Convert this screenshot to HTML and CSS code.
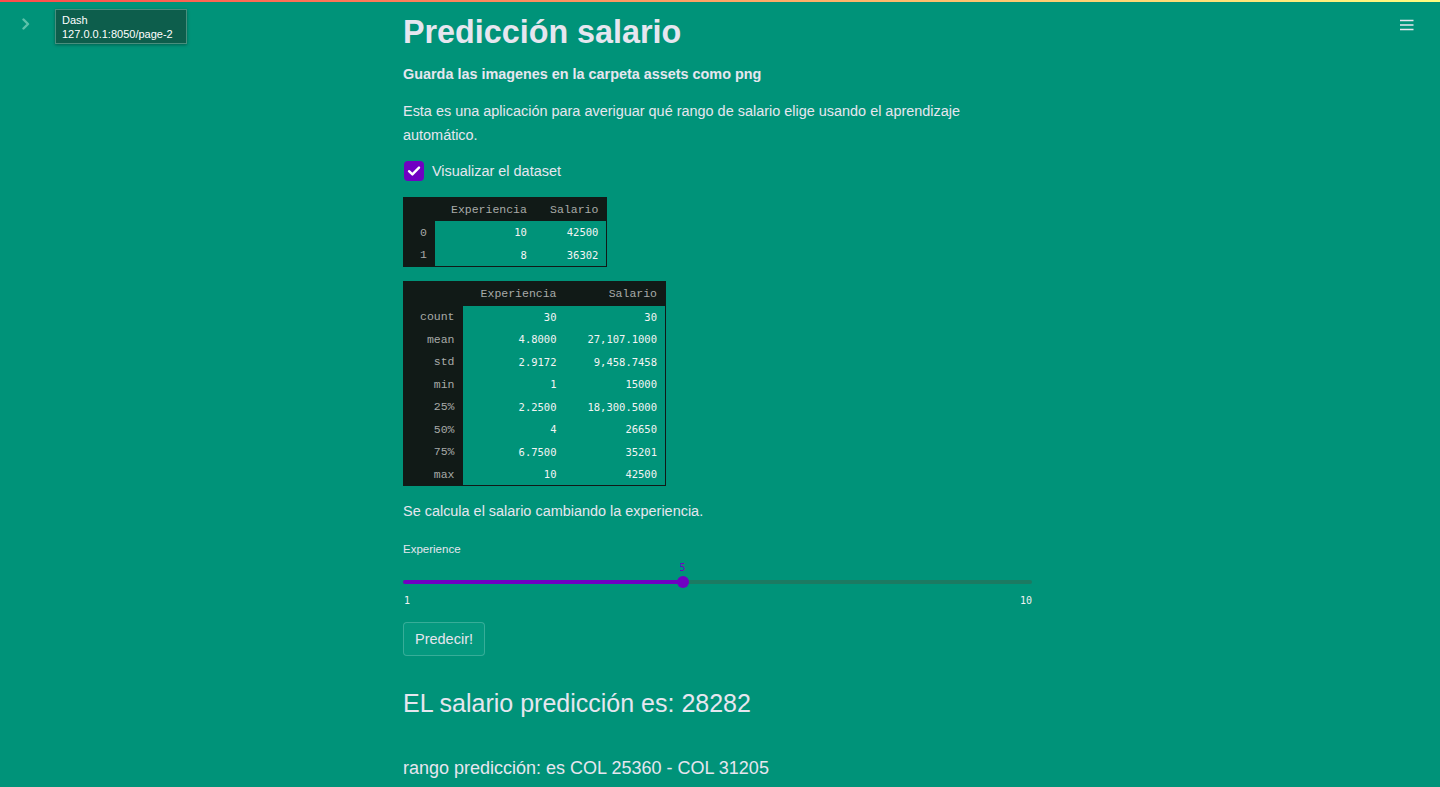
FILE: index.html
```html
<!DOCTYPE html>
<html lang="es">
<head>
<meta charset="utf-8">
<title>Predicción salario</title>
<link rel="stylesheet" href="styles.css">
</head>
<body>
<div class="decoration"></div>
<div class="app">
  <aside class="side">
    <button class="collapse" aria-label="Expand sidebar">
      <svg width="10" height="12" viewBox="0 0 10 12"><path d="M2.5 1.5 L7 6 L2.5 10.5" fill="none" stroke="currentColor" stroke-width="2.4" stroke-linecap="round" stroke-linejoin="round"/></svg>
    </button>
    <div class="tooltip">Dash<br>127.0.0.1:8050/page-2</div>
  </aside>
  <main class="main">
    <h1 class="title">Predicción salario</h1>
    <p class="subtitle">Guarda las imagenes en la carpeta assets como png</p>
    <p class="intro">Esta es una aplicación para averiguar qué rango de salario elige usando el aprendizaje automático.</p>
    <label class="check">
      <span class="box"><svg width="14" height="12" viewBox="0 0 14 12"><path d="M2 6.2 L5.4 9.4 L12 2.6" fill="none" stroke="#fff" stroke-width="2.4" stroke-linecap="round" stroke-linejoin="round"/></svg></span>
      <span class="check-label">Visualizar el dataset</span>
    </label>
    <table class="df df-small">
      <thead><tr><th class="idx"></th><th class="c1">Experiencia</th><th class="c2">Salario</th></tr></thead>
      <tbody>
        <tr><th class="idx">0</th><td>10</td><td>42500</td></tr>
        <tr><th class="idx">1</th><td>8</td><td>36302</td></tr>
      </tbody>
    </table>
    <table class="df df-desc">
      <thead><tr><th class="idx"></th><th class="c1">Experiencia</th><th class="c2">Salario</th></tr></thead>
      <tbody>
        <tr><th class="idx">count</th><td>30</td><td>30</td></tr>
        <tr><th class="idx">mean</th><td>4.8000</td><td>27,107.1000</td></tr>
        <tr><th class="idx">std</th><td>2.9172</td><td>9,458.7458</td></tr>
        <tr><th class="idx">min</th><td>1</td><td>15000</td></tr>
        <tr><th class="idx">25%</th><td>2.2500</td><td>18,300.5000</td></tr>
        <tr><th class="idx">50%</th><td>4</td><td>26650</td></tr>
        <tr><th class="idx">75%</th><td>6.7500</td><td>35201</td></tr>
        <tr><th class="idx">max</th><td>10</td><td>42500</td></tr>
      </tbody>
    </table>
    <p class="calc">Se calcula el salario cambiando la experiencia.</p>
    <div class="slider">
      <div class="slider-label">Experience</div>
      <div class="slider-body">
        <div class="track">
          <div class="fill" style="width: 44.44%"></div>
          <div class="thumb" style="left: 44.44%"><span class="thumb-value">5</span></div>
        </div>
        <div class="ticks"><span>1</span><span>10</span></div>
      </div>
    </div>
    <button class="btn">Predecir!</button>
    <h2 class="result">EL salario predicción es: 28282</h2>
    <h3 class="range">rango predicción: es COL 25360 - COL 31205</h3>
  </main>
  <div class="menu">
    <svg width="14" height="12" viewBox="0 0 14 12"><path d="M0 1.5 H13.5 M0 6 H13.5 M0 10.5 H13.5" stroke="#e6e6ef" stroke-width="1.6"/></svg>
  </div>
</div>
</body>
</html>
```

FILE: styles.css
```css
* { box-sizing: border-box; }
html, body { margin: 0; padding: 0; }
body {
  background: #009379;
  color: #e6e6ef;
  font-family: "Liberation Sans", Arial, sans-serif;
  height: 787px;
  overflow: hidden;
}
.decoration {
  position: absolute;
  top: 0; left: 0; right: 0;
  height: 2px;
  background: linear-gradient(90deg, #ff4b4b, #fffd80);
  z-index: 5;
}
.app {
  display: flex;
  height: 787px;
}
.side {
  position: relative;
  width: 403px;
  flex: none;
}
.collapse {
  position: absolute;
  top: 16px;
  left: 18px;
  width: 16px;
  height: 16px;
  border: 0;
  padding: 0;
  background: transparent;
  color: #5cc2aa;
  display: flex;
  align-items: center;
  justify-content: center;
}
.tooltip {
  position: absolute;
  top: 9px;
  left: 55px;
  width: 132px;
  height: 35px;
  padding: 3px 0 0 6px;
  background: #0d5e4c;
  border: 1px solid #4a8e7d;
  box-shadow: 0 1px 3px rgba(0,0,0,0.35);
  color: #ffffff;
  font-size: 11px;
  line-height: 14px;
}
.main {
  width: 630px;
  flex: none;
  padding-top: 13px;
}
.title {
  margin: 0;
  font-size: 32.3px;
  line-height: 38px;
  font-weight: 700;
  letter-spacing: 0;
}
.subtitle {
  margin: 11px 0 0;
  font-size: 14.4px;
  line-height: 24px;
  font-weight: 700;
}
.intro {
  margin: 14px 0 0;
  font-size: 14.45px;
  line-height: 23.5px;
}
.check {
  margin-top: 14px;
  display: flex;
  align-items: center;
  height: 20px;
}
.box {
  width: 20px;
  height: 20px;
  border-radius: 4px;
  background: #7000c2;
  display: flex;
  align-items: center;
  justify-content: center;
  margin-left: 1px;
}
.check-label {
  margin-left: 8px;
  font-size: 14.45px;
}
.df {
  border-collapse: collapse;
  border: 1px solid #111a17;
  font-family: "Liberation Mono", "Courier New", monospace;
  font-size: 11.5px;
}
.df th, .df td {
  text-align: right;
  padding: 0 8px 0 0;
  font-weight: 400;
}
.df thead th {
  background: #111a17;
  color: #a8aaa8;
}
.df th.idx {
  background: #111a17;
  color: #a8aaa8;
}
.df td {
  font-family: "DejaVu Sans Mono", monospace;
  font-size: 10.5px;
  color: #f4f4f4;
}
.df-small {
  margin-top: 16px;
}
.df-small thead tr { height: 23px; }
.df-small tbody tr { height: 23px; }
.df-small .idx { width: 30px; text-align: left; padding-left: 16px; }
.df-small .c1 { width: 100px; }
.df-small .c2 { width: 72px; }
.df-desc {
  margin-top: 14px;
}
.df-desc thead tr { height: 24px; }
.df-desc tbody tr { height: 22.5px; }
.df-desc .idx { width: 59px; }
.df-desc .c1 { width: 102px; }
.df-desc .c2 { width: 101px; }
.calc {
  margin: 13px 0 0;
  font-size: 14.45px;
  line-height: 24px;
}
.slider {
  margin-top: 18px;
  width: 629px;
}
.slider-label {
  font-size: 11.5px;
  line-height: 16px;
}
.slider-body {
  padding-top: 23px;
}
.track {
  position: relative;
  height: 4px;
  background: #1c7a62;
  border-radius: 2px;
}
.fill {
  height: 4px;
  background: #7000c2;
  border-radius: 2px;
}
.thumb {
  position: absolute;
  top: -4px;
  width: 12px;
  height: 12px;
  margin-left: -6px;
  border-radius: 50%;
  background: #7000c2;
}
.thumb-value {
  position: absolute;
  bottom: 14px;
  left: 50%;
  transform: translateX(-50%);
  font-family: "DejaVu Sans Mono", monospace;
  font-size: 10px;
  line-height: 12px;
  color: #7000c2;
}
.ticks {
  display: flex;
  justify-content: space-between;
  margin-top: 11px;
  font-family: "DejaVu Sans Mono", monospace;
  font-size: 10px;
  line-height: 12px;
  color: #f2f2f2;
  padding-left: 1px;
}
.btn {
  display: block;
  margin-top: 15px;
  width: 82px;
  height: 34px;
  border: 1px solid rgba(255,255,255,0.2);
  border-radius: 4px;
  background: #05997f;
  color: #e6e6ef;
  font-family: "Liberation Sans", Arial, sans-serif;
  font-size: 14.5px;
  padding: 0;
}
.result {
  margin: 32px 0 0;
  font-size: 25px;
  line-height: 30px;
  font-weight: 400;
}
.range {
  margin: 38px 0 0;
  font-size: 18px;
  line-height: 24px;
  font-weight: 400;
}
.menu {
  margin-left: auto;
  margin-right: 26px;
  margin-top: 19px;
  height: 12px;
}
.menu svg { display: block; }
```
